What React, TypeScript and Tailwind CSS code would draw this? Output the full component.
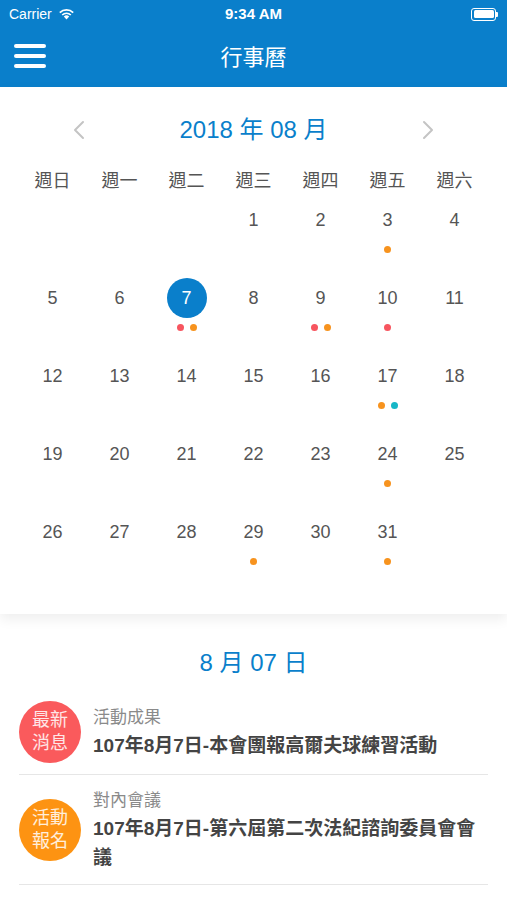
import React from "react";

const FONT = { fontFamily: '"Liberation Sans", "Noto Sans CJK TC", sans-serif' };

type Day = { n: number | null; dots?: string[]; sel?: boolean };

const R = "#f7555f";
const O = "#f7931e";
const T = "#17b7c7";

const days: Day[] = [
  { n: null }, { n: null }, { n: null },
  { n: 1 }, { n: 2 }, { n: 3, dots: [O] }, { n: 4 },
  { n: 5 }, { n: 6 }, { n: 7, sel: true, dots: [R, O] }, { n: 8 }, { n: 9, dots: [R, O] }, { n: 10, dots: [R] }, { n: 11 },
  { n: 12 }, { n: 13 }, { n: 14 }, { n: 15 }, { n: 16 }, { n: 17, dots: [O, T] }, { n: 18 },
  { n: 19 }, { n: 20 }, { n: 21 }, { n: 22 }, { n: 23 }, { n: 24, dots: [O] }, { n: 25 },
  { n: 26 }, { n: 27 }, { n: 28 }, { n: 29, dots: [O] }, { n: 30 }, { n: 31, dots: [O] }, { n: null },
];

const weeks = ["週日", "週一", "週二", "週三", "週四", "週五", "週六"];

function Wifi() {
  return (
    <svg width="17" height="12" viewBox="0 0 17 12">
      <path d="M8.5 11.5 L5.8 8.6 A3.8 3.8 0 0 1 11.2 8.6 Z" fill="white" />
      <path d="M3.6 6.4 A7 7 0 0 1 13.4 6.4 L12.2 7.6 A5.3 5.3 0 0 0 4.8 7.6 Z" fill="white" />
      <path d="M1.2 4 A10.4 10.4 0 0 1 15.8 4 L14.6 5.2 A8.7 8.7 0 0 0 2.4 5.2 Z" fill="white" />
    </svg>
  );
}

function Chevron({ dir }: { dir: "l" | "r" }) {
  return (
    <svg width="12" height="20" viewBox="0 0 12 20">
      <path
        d={dir === "l" ? "M10 2 L2 10 L10 18" : "M2 2 L10 10 L2 18"}
        stroke="#c4c4c4"
        strokeWidth="2"
        fill="none"
        strokeLinecap="round"
        strokeLinejoin="round"
      />
    </svg>
  );
}

export default function App() {
  return (
    <div className="w-[507px] h-[900px] bg-white overflow-hidden" style={FONT}>
      {/* status + nav */}
      <div className="bg-[#0a7fcb] text-white">
        <div className="h-[28px] flex items-center justify-between px-[9px] relative">
          <div className="flex items-center gap-[6px] text-[14px]">
            <span>Carrier</span>
            <Wifi />
          </div>
          <div className="absolute left-0 right-0 text-center text-[15px] font-bold">9:34 AM</div>
          <div className="flex items-center">
            <div className="w-[25px] h-[13px] rounded-[3px] border border-white p-[1.5px]">
              <div className="w-full h-full bg-white rounded-[1.5px]" />
            </div>
            <div className="w-[2px] h-[5px] bg-white rounded-r-[1px]" />
          </div>
        </div>
        <div className="h-[59px] flex items-center relative">
          <div className="absolute left-[14px] top-[16px] flex flex-col gap-[6px]">
            <div className="w-[32px] h-[4px] bg-white rounded-full" />
            <div className="w-[32px] h-[4px] bg-white rounded-full" />
            <div className="w-[32px] h-[4px] bg-white rounded-full" />
          </div>
          <div className="w-full text-center text-[22px]">行事曆</div>
        </div>
      </div>

      {/* calendar card */}
      <div className="bg-white pt-[23px] pb-[24px] px-[19px] shadow-[0_5px_12px_rgba(0,0,0,0.07)] relative">
        <div className="h-10 flex items-center justify-between px-[54px]">
          <Chevron dir="l" />
          <div className="text-[24px] text-[#0a7fcb]">2018 年 08 月</div>
          <Chevron dir="r" />
        </div>
        <div className="grid grid-cols-7 mt-[16px] h-[30px] items-center">
          {weeks.map((w) => (
            <div key={w} className="text-center text-[18px] text-[#555]">{w}</div>
          ))}
        </div>
        <div className="grid grid-cols-7 mt-[4px]">
          {days.map((d, i) => (
            <div key={i} className="h-[78px] flex flex-col items-center">
              {d.n !== null && (
                <>
                  <div
                    className={
                      d.sel
                        ? "w-10 h-10 rounded-full bg-[#0a7fcb] text-white flex items-center justify-center text-[18px]"
                        : "h-10 flex items-center justify-center text-[18px] text-[#555]"
                    }
                  >
                    {d.n}
                  </div>
                  <div className="mt-[6px] flex gap-[6px] h-[6px]">
                    {(d.dots || []).map((c, j) => (
                      <div key={j} className="w-[7px] h-[7px] rounded-full" style={{ backgroundColor: c }} />
                    ))}
                  </div>
                </>
              )}
            </div>
          ))}
        </div>
      </div>

      {/* day list */}
      <div className="pt-[34px] px-[19px]">
        <div className="h-[30px] flex items-center justify-center text-[24px] text-[#0a7fcb]">8 月 07 日</div>
        <div className="mt-[10px]">
          <div className="flex items-center gap-[12px] pt-[13px] pb-[11px] border-b border-[#e6e6e6]">
            <div className="w-[62px] h-[62px] shrink-0 rounded-full bg-[#fa5a5c] flex flex-col items-center justify-center text-[18px] leading-[23px] text-white/85">
              <span>最新</span>
              <span>消息</span>
            </div>
            <div className="flex flex-col">
              <div className="text-[17px] leading-[26px] text-[#8a8a8a]">活動成果</div>
              <div className="text-[19px] leading-[29px] font-bold text-[#444]">107年8月7日-本會團報高爾夫球練習活動</div>
            </div>
          </div>
          <div className="flex items-center gap-[12px] pt-[13px] pb-[12px] border-b border-[#e6e6e6]">
            <div className="w-[62px] h-[62px] shrink-0 rounded-full bg-[#fd9312] flex flex-col items-center justify-center text-[18px] leading-[23px] text-white/85">
              <span>活動</span>
              <span>報名</span>
            </div>
            <div className="flex flex-col">
              <div className="text-[17px] leading-[26px] text-[#8a8a8a]">對內會議</div>
              <div className="text-[19px] leading-[29px] font-bold text-[#444]">107年8月7日-第六屆第二次法紀諮詢委員會會議</div>
            </div>
          </div>
        </div>
      </div>
    </div>
  );
}
